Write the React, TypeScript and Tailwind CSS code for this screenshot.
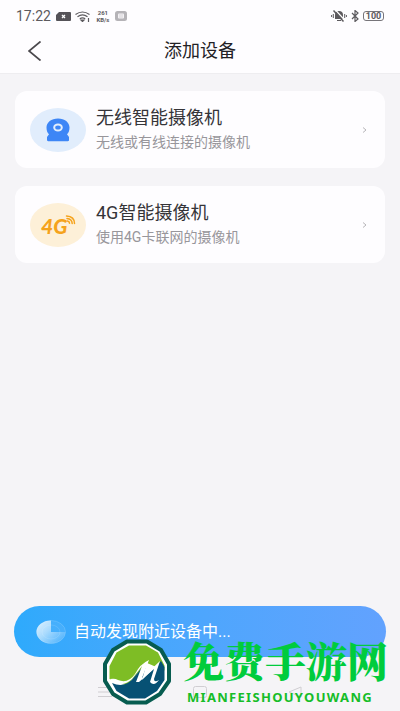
import React from "react";

function StatusBar() {
  return (
    <div className="flex h-8 items-center gap-1 px-4 text-[#5c5a5e]">
      <span className="mr-px text-[14px] leading-4">17:22</span>
      <svg className="h-[9px] w-[15px]" viewBox="0 0 15 9" aria-hidden="true">
        <path d="M3 0h11a1 1 0 0 1 1 1v7a1 1 0 0 1-1 1H1a1 1 0 0 1-1-1V3z" fill="#555358" />
        <path d="M6 3l3 3M9 3L6 6" stroke="#fff" strokeWidth="1.3" />
      </svg>
      <svg className="h-[11px] w-4" viewBox="0 0 16 11" fill="none" stroke="#5c5a5e" strokeWidth="1.2" aria-hidden="true">
        <path d="M.5 3.500Q7.500-1.500 14.500 3.500M2.500 5.700q5-3.500 10 0M4.800 7.800q2.700-1.900 5.400 0" />
        <path d="M6 9l1.500 1.500L9 9zM13.500 7v4" fill="#5c5a5e" />
      </svg>
      <span className="flex w-4 flex-col text-center text-[6px] leading-[7px] font-bold">
        <span>261</span>
        <span>KB/s</span>
      </span>
      <svg className="h-[10px] w-3" viewBox="0 0 12 10" aria-hidden="true">
        <rect width="12" height="10" rx="2.500" fill="#b5b3b7" />
        <rect x="3" y="2.500" width="6" height="5" rx="1" fill="#f4f2f5" />
        <path d="M4 4h4M4 6h4" stroke="#c9c7cb" strokeWidth=".7" />
      </svg>
      <svg className="ml-auto h-3 w-4" viewBox="0 0 16 12" aria-hidden="true">
        <path d="M4 9V5a4 4 0 0 1 8 0v4zM6 10h4v1H6z" fill="#5c5a5e" />
        <path d="M.6 5v2M2.300 4v4M13.700 4v4M15.400 5v2" stroke="#5c5a5e" />
        <path d="M4.500 0l10 11" stroke="#fff" strokeWidth="1.200" />
        <path d="M2.500.5l10 11" stroke="#5c5a5e" strokeWidth="1.500" />
      </svg>
      <svg className="h-3 w-2" viewBox="0 0 8 12" fill="none" stroke="#5c5a5e" strokeWidth="1.200" aria-hidden="true">
        <path d="M1 3l6 6-3 2.500V.5L7 3 1 9" />
      </svg>
      <span className="flex h-[10px] w-[21px] items-center justify-center rounded-[3px] border border-[#77757a] text-[9px] leading-[9px] font-bold">
        100
      </span>
    </div>
  );
}

function CameraIcon() {
  return (
    <svg className="h-[44px] w-[56px] shrink-0" viewBox="0 0 56 44" aria-hidden="true">
      <ellipse cx="28" cy="22" rx="28" ry="22" fill="#e1edfc" />
      <path
        d="M28 10.500c6.700 0 11.500 3.900 11.500 9 0 3-.8 5.300-2.500 6.800l2 2.600v3.200c0 .8-.5 1.200-1.200 1.200H18.200c-.7 0-1.200-.4-1.200-1.200v-3.200l2-2.600c-1.700-1.500-2.500-3.800-2.500-6.800 0-5.100 4.800-9 11.500-9z"
        fill="#3d86f6"
      />
      <ellipse cx="28" cy="19.500" rx="3.800" ry="3" fill="#3d86f6" stroke="#e1edfc" strokeWidth="2" />
    </svg>
  );
}

function FourGIcon() {
  return (
    <svg className="h-[44px] w-[56px] shrink-0" viewBox="0 0 56 44" fill="none" stroke="#f5a31c" strokeLinecap="round" aria-hidden="true">
      <ellipse cx="28" cy="22" rx="28" ry="22" fill="#fdf0d8" stroke="none" />
      <text x="11" y="31" className="font-['Lato',sans-serif] text-[21px] font-black italic" fill="#f5a31c" stroke="none">4G</text>
      <path d="M37.500 18q2 .5 2 2.200M37 15.500q5 .5 5.200 5M36.500 13q8 .5 8 7.500" strokeWidth="1.500" />
    </svg>
  );
}

function DeviceCard({ icon, title, detail }: { icon: React.ReactNode; title: string; detail: string }) {
  return (
    <button type="button" className="flex h-[77px] w-full items-center rounded-xl bg-[#fefdff] pr-4 pl-[15px] text-left">
      {icon}
      <span className="ml-[10px] flex flex-1 flex-col pt-px">
        <span className="text-[18px] leading-6 text-[#353438]">{title}</span>
        <span className="text-[14px] leading-6 text-[#98969b]">{detail}</span>
      </span>
      <svg className="mr-0.5 h-[6px] w-[5px]" viewBox="0 0 5 6" fill="none" stroke="#b7b5b9" aria-hidden="true">
        <path d="M1 .5L4 3 1 5.500" />
      </svg>
    </button>
  );
}

function Radar() {
  return (
    <svg className="h-6 w-[30px] shrink-0" viewBox="0 0 30 24" aria-hidden="true">
      <defs>
        <linearGradient id="sweep" x1="0" y1="0" x2="1" y2=".8">
          <stop offset="0" stopColor="#fff" stopOpacity=".85" />
          <stop offset=".45" stopColor="#fff" stopOpacity=".55" />
          <stop offset="1" stopColor="#fff" stopOpacity=".05" />
        </linearGradient>
      </defs>
      <ellipse cx="15" cy="12" rx="14.500" ry="11.500" fill="#fff" fillOpacity=".08" stroke="#fff" strokeOpacity=".25" strokeWidth=".6" />
      <path d="M15 12V.5A14.500 11.500 0 1 0 29.500 12z" fill="url(#sweep)" />
      <ellipse cx="15" cy="12" rx="9" ry="7" fill="none" stroke="#fff" strokeOpacity=".2" strokeWidth=".6" />
    </svg>
  );
}

function Emblem() {
  return (
    <svg className="h-[66px] w-[68px] shrink-0" viewBox="0 0 68 66" aria-hidden="true">
      <path d="M24 2.500L44 2.500 58 11 66 25 66 42 57 55 43 63.500 24 63.500 10 55 2 42 2 25 10 11z" fill="#fff" stroke="#075c50" strokeWidth="4" strokeLinejoin="round" />
      <path d="M26 6.500h17l12 7 6.500 13v5L44 24 24 46q-8-1-17.500-6V27l7-13.500z" fill="#7ebd25" />
      <path d="M9 44q14 6 23-7L44 23l-5 18 19-19 3.500 6v13l-7.500 11-12 7.500H26L13.500 52z" fill="#075174" />
      <path d="M7 40q5-1 8 1 10 4 17-6 5-10 14-14l-7 18 18-17-6 18q0 4 5 1-5 7-9 2l4-13-15 13h-3l6-16q-6 8-10 13-6 6-13 5-6 0-9-5z" fill="#fff" />
    </svg>
  );
}

export default function App() {
  return (
    <div className="relative flex min-h-screen flex-col bg-[#f5f4f7] font-['Roboto','Noto_Sans_CJK_SC',sans-serif]">
      <header className="border-b border-[#eeedf0] bg-[#fefdff]">
        <StatusBar />
        <div className="grid h-[41px] grid-cols-[64px_1fr_64px] items-center pb-1">
          <button type="button" aria-label="返回" className="flex h-8 items-center pl-7">
            <svg className="h-5 w-[13px]" viewBox="0 0 13 20" fill="none" stroke="#4a484c" strokeWidth="1.700" aria-hidden="true">
              <path d="M12.500.5L1 10l11.500 9.500" />
            </svg>
          </button>
          <h1 className="text-center text-[18px] leading-6 text-[#222125]">添加设备</h1>
        </div>
      </header>

      <main className="flex flex-1 flex-col gap-[18px] px-[15px] pt-[17px]">
        <DeviceCard icon={<CameraIcon />} title="无线智能摄像机" detail="无线或有线连接的摄像机" />
        <DeviceCard icon={<FourGIcon />} title="4G智能摄像机" detail="使用4G卡联网的摄像机" />
      </main>

      <footer className="px-[14px]">
        <button type="button" className="flex h-[51px] w-full items-center gap-2 rounded-full bg-linear-to-r from-[#2eaafc] to-[#62a2fe] pl-[22px] text-[16px] leading-6 text-white">
          <Radar />
          <span>自动发现附近设备中...</span>
        </button>
        <nav className="flex h-[54px] items-center justify-around px-11 pt-4">
          <button type="button" aria-label="菜单" className="flex h-6 w-6 items-center justify-center">
            <svg className="h-3 w-[14px]" viewBox="0 0 14 12" stroke="#d0ced2" aria-hidden="true"><path d="M0 1.500h14M0 6h14M0 10.500h14" /></svg>
          </button>
          <button type="button" aria-label="主页" className="flex h-6 w-6 items-center justify-center">
            <svg className="h-3 w-[14px]" viewBox="0 0 14 12" fill="none" stroke="#d0ced2" aria-hidden="true"><rect x=".5" y=".5" width="13" height="11" rx="2" /></svg>
          </button>
          <button type="button" aria-label="后退" className="flex h-6 w-6 items-center justify-center">
            <svg className="h-3 w-[14px]" viewBox="0 0 14 12" fill="none" stroke="#d0ced2" aria-hidden="true"><path d="M13 1v10L1 6z" /></svg>
          </button>
        </nav>
      </footer>

      <div className="pointer-events-none absolute right-3 bottom-[6px] flex items-center gap-3">
        <Emblem />
        <div className="flex flex-col">
          <span className="font-['Noto_Serif_CJK_SC','Noto_Sans_CJK_SC',serif] text-[41px] leading-[42px] font-black text-[#00cc3d]">免费手游网</span>
          <span className="mt-2 pl-1 font-['Noto_Sans',sans-serif] text-[13px] leading-4 font-bold tracking-widest text-[#16bd28]">MIANFEISHOUYOUWANG</span>
        </div>
      </div>
    </div>
  );
}
